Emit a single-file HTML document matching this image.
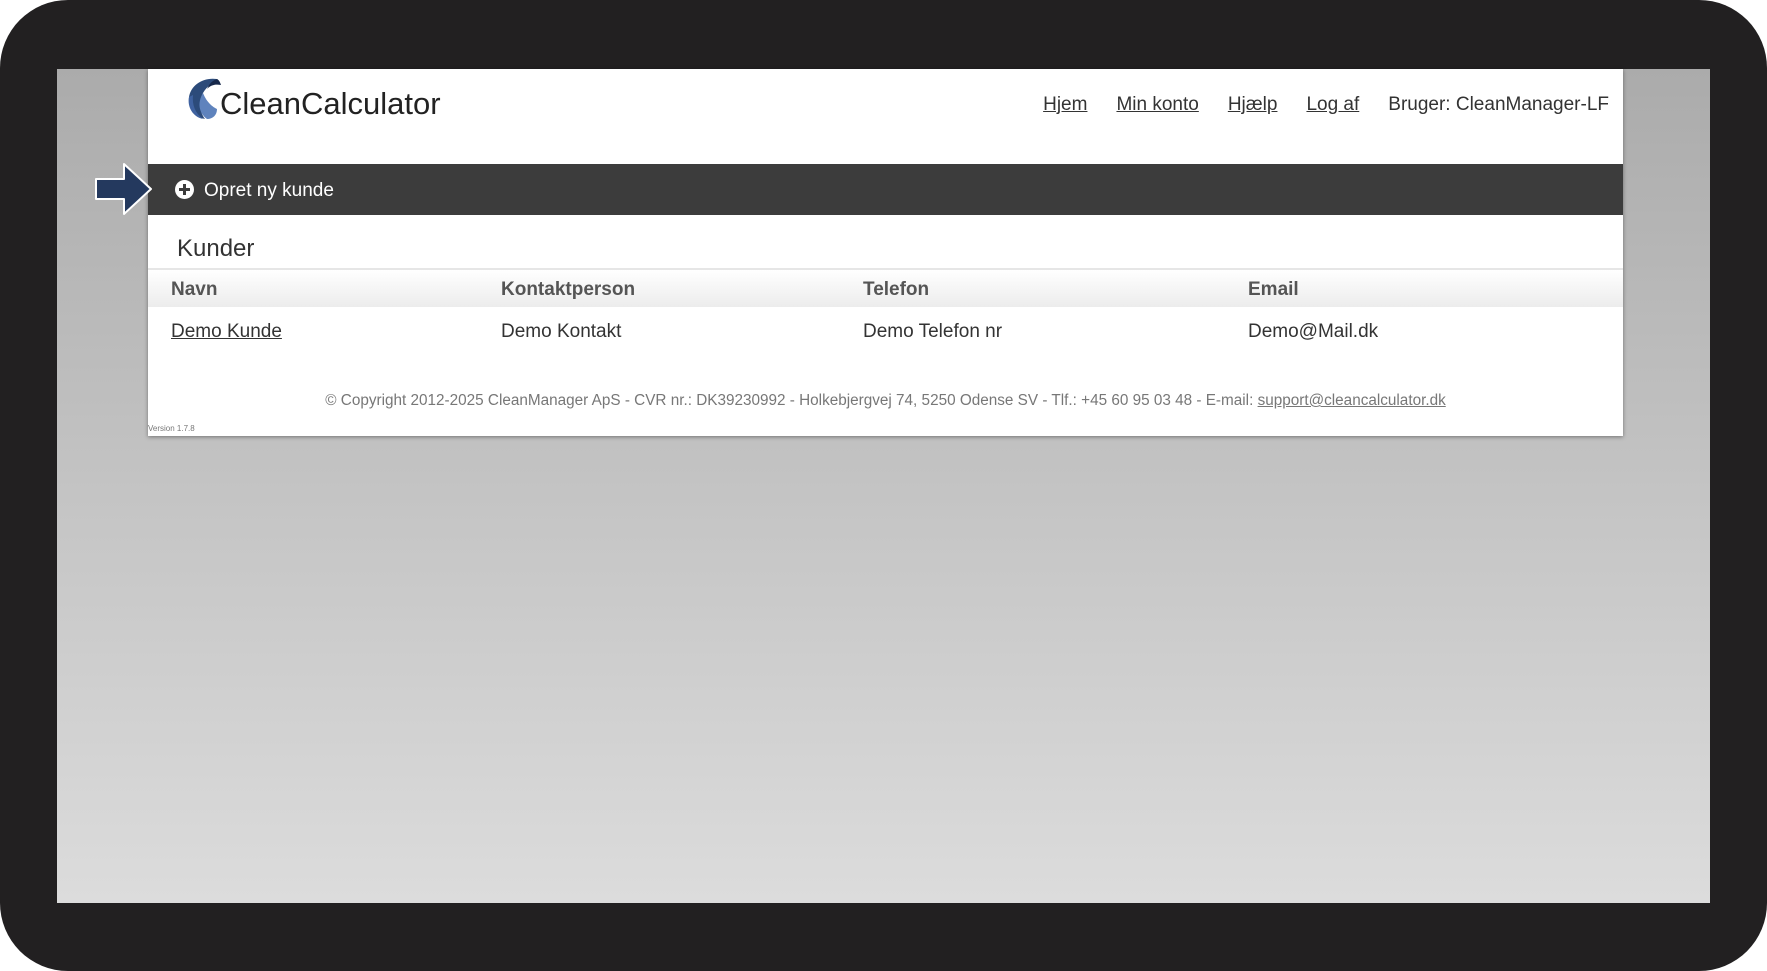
<!DOCTYPE html>
<html><head><meta charset="utf-8"><style>
*{margin:0;padding:0;box-sizing:border-box}
body{width:1767px;height:971px;background:#fff;font-family:"Liberation Sans",sans-serif;position:relative;overflow:hidden}
.frame{position:absolute;left:0;top:0;width:1767px;height:971px;background:#222021;border-radius:68px}
.gray{position:absolute;left:57px;top:69px;width:1653px;height:834px;background:linear-gradient(#ababab,#dcdcdc)}
.panel{position:absolute;left:148px;top:69px;width:1475px;height:367px;background:#fff;box-shadow:0 1px 4px rgba(0,0,0,.4)}
.logo{position:absolute;left:35px;top:8px}
.brand{position:absolute;left:72px;top:17px;font-size:31px;color:#222;letter-spacing:0px}
.nav{position:absolute;right:14px;top:25px;font-size:19px;color:#333}
.nav a{color:#333;text-decoration:underline;margin-right:29px}
.bar{position:absolute;left:0;top:95px;width:100%;height:51px;background:#3c3c3c;color:#fff;font-size:19px}
.bar .t{position:absolute;left:56px;top:16px}
.plus{position:absolute;left:27px;top:16px;width:19px;height:19px;border-radius:50%;background:#fff}
.plus:before{content:"";position:absolute;left:4px;top:8px;width:11px;height:3px;background:#3c3c3c}
.plus:after{content:"";position:absolute;left:8px;top:4px;width:3px;height:11px;background:#3c3c3c}
.h{position:absolute;left:29px;top:166px;font-size:24px;color:#333}
.thead{position:absolute;left:0;top:199px;width:100%;height:39px;border-top:2px solid #e6e6e6;background:linear-gradient(#fff,#ececec)}
.c{position:absolute;font-size:19px;color:#333}
.b{font-weight:bold;color:#555;top:9px}
.r{top:252px}
.foot{position:absolute;left:0;width:100%;text-align:center;top:323px;font-size:15.3px;color:#777}
.foot a{color:#777}
.ver{position:absolute;left:0;top:355px;font-size:8px;color:#777}
</style></head><body>
<div class="frame"></div>
<div class="gray"></div>
<div class="panel">
 <svg class="logo" width="40" height="44" viewBox="0 0 40 44">
  <path d="M34 2 C20 0 8 8 6 20 C5 30 12 40 22 42 C16 34 16 24 20 16 C24 9 30 6 34 2Z" fill="#2c4b7a"/>
  <path d="M20 16 C14 26 16 36 24 42 C30 42 34 38 34 32 C30 30 24 26 20 16Z" fill="#5f83bd"/>
  <path d="M6 20 C4 30 10 40 20 42 C12 36 9 28 10 18Z" fill="#3f62a0"/>
  <path d="M34 2 C28 4 26 8 24 12 C28 8 32 7 38 8 C37 5 36 3 34 2Z" fill="#16284a"/>
 </svg>
 <div class="brand">CleanCalculator</div>
 <div class="nav"><a>Hjem</a><a>Min konto</a><a>Hjælp</a><a>Log af</a>Bruger: CleanManager-LF</div>
 <div class="bar"><div class="plus"></div><div class="t">Opret ny kunde</div></div>
 <div class="h">Kunder</div>
 <div class="thead">
  <div class="c b" style="left:23px">Navn</div>
  <div class="c b" style="left:353px">Kontaktperson</div>
  <div class="c b" style="left:715px">Telefon</div>
  <div class="c b" style="left:1100px">Email</div>
 </div>
 <div class="c r" style="left:23px;text-decoration:underline">Demo Kunde</div>
 <div class="c r" style="left:353px">Demo Kontakt</div>
 <div class="c r" style="left:715px">Demo Telefon nr</div>
 <div class="c r" style="left:1100px">Demo@Mail.dk</div>
 <div class="foot">© Copyright 2012-2025 CleanManager ApS - CVR nr.: DK39230992 - Holkebjergvej 74, 5250 Odense SV - Tlf.: +45 60 95 03 48 - E-mail: <a style="text-decoration:underline">support@cleancalculator.dk</a></div>
 <div class="ver">Version 1.7.8</div>
</div>
<svg style="position:absolute;left:94px;top:162px" width="60" height="54" viewBox="0 0 60 54">
 <path d="M2 17 H30 V2 L57 27 L30 52 V37 H2 Z" fill="#24395e" stroke="#fff" stroke-width="2" stroke-linejoin="round"/>
</svg>
</body></html>
